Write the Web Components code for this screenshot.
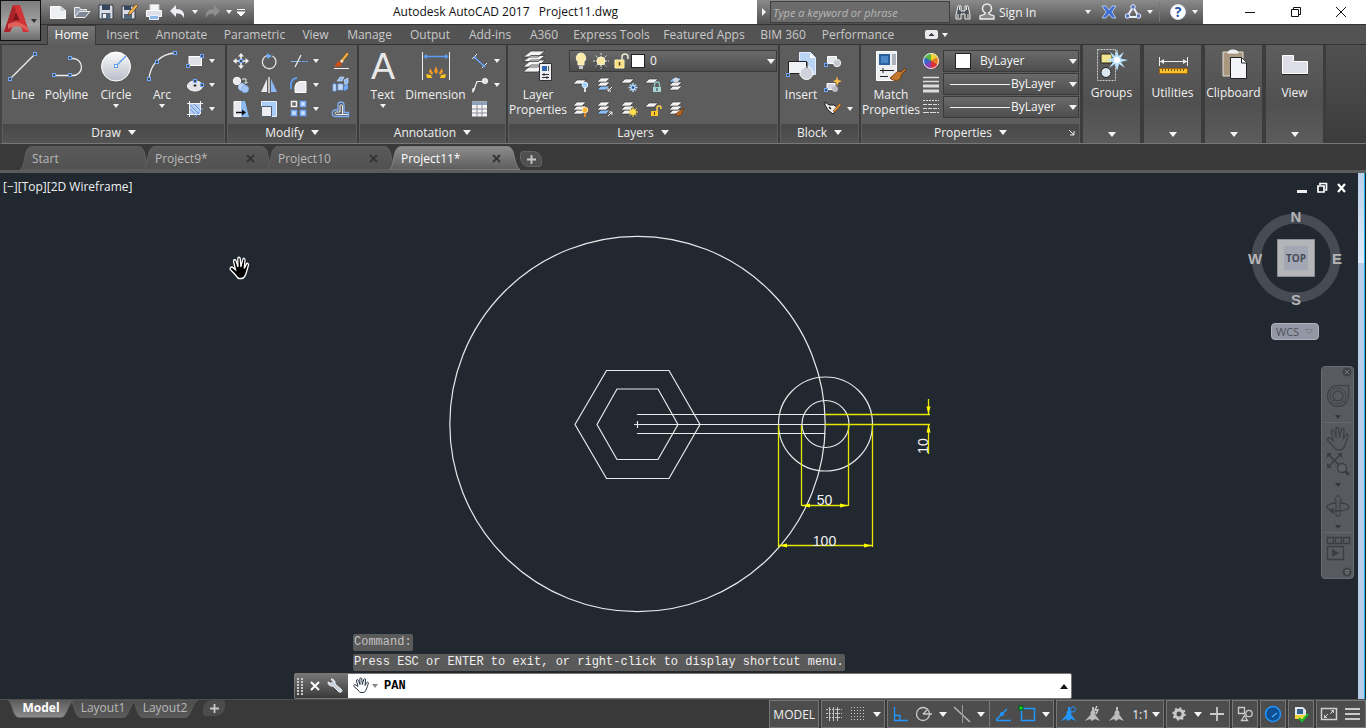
<!DOCTYPE html>
<html lang="en">
<head>
<meta charset="utf-8">
<title>Autodesk AutoCAD 2017 - Project11.dwg</title>
<style>
html,body{margin:0;height:100%;background:#393939}
body{font:11px/15px "Open Sans","Noto Sans",sans-serif;color:#f0f0f0}
</style>
</head>
<body>
<cad-app></cad-app>
<script>
/* ---------- icon artwork: [width, height, markup] ---------- */
const node = (x, y) => `<rect x="${x - 1.5}" y="${y - 1.5}" width="3" height="3" fill="#44484f" stroke="#6fa8ff"/>`;
const sheet = (x, y, f = '#f2f2f2') => `<path d="M${x + 4} ${y}h9l-4 4h-9z" fill="${f}" stroke="#333" stroke-width=".6"/>`;
const stack = (blue = -1) => [0, 1, 2].reverse().map(i => sheet(2, 3 + i * 4, i === blue ? '#8cc0f5' : '#f2f2f2')).join('');
const hand = 'M6 13 2 9.500c-1-1 .5-2.500 2-1.500l2 1.500L4.500 4c-.4-1.600 1.400-2 2-.5l1.500 4-.2-5.500c0-1.500 1.900-1.500 2 0l.5 5.500 1.500-5c.4-1.400 2-1 1.800.5L13 8.500l1.700-2.800c.8-1.200 2.200-.4 1.600.9-.9 2.300-1.300 4.400-2.300 6.400-.7 1.400-1.500 2.500-3 2.500H9c-1.500 0-2.200-1.500-3-2.500z';
const person = (f, extra = '') => `<path d="M8 2v6L1 16l5-2 2 2 3-2 5 2-6-8V2z" fill="${f}"/><circle cx="9" cy="8" r="2.500" fill="${f}"/>${extra}`;
const ICONS = {
  down: [6, 4, '<path d="M0 0h6L3 4z" fill="#f4f4f4"/>'],
  downb: [8, 5, '<path d="M0 0h8L4 5z" fill="#f4f4f4"/>'],
  line: [32, 32, `<path d="M3 28 28 3" stroke="#eee" stroke-width="1.300"/>${node(3, 28)}${node(28, 3)}`],
  polyline: [32, 32, `<path d="M3 24.500H22a8.500 8.500 0 0 0 0-17h-3" fill="none" stroke="#eee" stroke-width="1.300"/>${node(3, 24)}${node(19, 24)}${node(19, 7)}`],
  circle: [32, 32, `<circle cx="16" cy="15.500" r="14.500" fill="url(#g)" stroke="#fff"/><defs><linearGradient id="g" x2="0" y2="1"><stop stop-color="#fcfcfd"/><stop offset="1" stop-color="#b9bdc9"/></linearGradient></defs><path d="M16 15 26 5" stroke="#5b9cf5" stroke-width="1.300"/><rect x="14.500" y="13.500" width="3" height="3" fill="#fff" stroke="#5b9cf5"/>`],
  arc: [32, 32, `<path d="M3 28C4 14 14 3 29 2" fill="none" stroke="#eee" stroke-width="1.300"/>${node(3, 28)}${node(11, 11)}${node(29, 2)}`],
  rect: [20, 20, `<rect x="4" y="5.500" width="12.500" height="9" fill="#dfe1e8" stroke="#fff"/>${node(3, 15)}${node(17, 5)}`],
  ellipse: [20, 20, `<ellipse cx="10" cy="11" rx="7.500" ry="5" fill="#e2e4ea" stroke="#fff"/>${node(10, 6)}${node(17, 10)}<path d="M8.500 10.500h3M10 9v3" stroke="#222"/>`],
  hatch: [20, 20, '<rect x="5" y="5" width="10" height="10" fill="#b9cfee"/><path d="M5 10 10 15M5 6l9 9M9 5l6 6" stroke="#5b94dd"/><path d="M2 4.500h16M2 15.500h13M4.500 2v16M15.500 2v13" stroke="#f2f2f2"/><path d="M18 9 10 18" stroke="#6fa8ff"/>'],
  move: [20, 20, `<path d="M10 2 13 5.500h-2.200V8H9.200V5.500H7zM10 18l-3-3.500h2.200V12h1.600v2.500H13zM2 10l3.500-3v2.200H8v1.600H5.500V13zM18 10l-3.500 3v-2.200H12V9.200h2.500V7z" fill="#f2f2f2"/>${node(10, 10)}`],
  rotate: [20, 20, '<path d="M13.500 5A6.800 6.800 0 1 1 8 4.500" fill="none" stroke="#e6e6e6" stroke-width="1.300"/><path d="M8 2v6l5-3z" fill="#6fa8ff"/>'],
  trim: [20, 20, '<path d="M2 10.500h6" stroke="#8ab6f8"/><path d="M9 10.500h10" stroke="#6fa8ff" stroke-dasharray="3 1"/><path d="M6 16 12 4" stroke="#eee" stroke-width="1.300"/>'],
  erase: [20, 20, '<path d="M3 17.500h15" stroke="#eee"/><path d="M16 1 9 10l2 2 7-9z" fill="#f0b04a" stroke="#6b3d0b" stroke-width=".6"/><path d="M9 10c-4 0-3 4-6 5 3 2 8 1 8-3z" fill="#c8501e"/><path d="m9 10 1.500-1.500 2 2L11 12z" fill="#f4f0e4"/>'],
  copy: [20, 20, '<circle cx="6" cy="6" r="3.700" fill="#e9eaf0" stroke="#fff"/><circle cx="11" cy="12" r="3.500" fill="#c5d4ee" stroke="#9fc3f8"/><circle cx="14" cy="14" r="3.500" fill="#a9c4ec" stroke="#7fb2fa"/><path d="M11 4h4v4M13.500 7 15 8.500 16.500 7" fill="none" stroke="#eee"/>'],
  mirror: [20, 20, '<path d="M2 17h6V4z" fill="#e8e9ee"/><path d="M12 4v13h6z" fill="#8ab9f5"/><path d="M10 2v16" stroke="#f4f4f4" stroke-width="1.300"/>'],
  fillet: [20, 20, '<path d="M6 17.500v-6a6 6 0 0 1 5-5h6v11z" fill="#e9eaef" stroke="#fff"/><path d="M2 14V9a6 6 0 0 1 6-6" fill="none" stroke="#5f9ff6" stroke-width="1.800"/>'],
  explode: [20, 20, '<path d="m6 6 3-4h4l-2 4zM13 5l4-2v5l-3 2z" fill="#8abcf2" stroke="#ddeaff" stroke-width=".6"/><path d="M2 9h3v7H2zM7 9h5v6H7z" fill="#cadbf4" stroke="#6fa8ff" stroke-width=".8"/><path d="m13 11 4-2v5l-4 2z" fill="#6fa8ff"/>'],
  stretch: [20, 20, '<path d="M3 2.500h7v15H3z" fill="#e8eaf0" stroke="#fff"/><path d="M10 2h4l4 16h-8z" fill="#8dbcf2"/><path d="M5 13.500h7" stroke="#111" stroke-width="1.500"/><path d="M11 10.500v6l4-3z" fill="#111"/>'],
  scale: [20, 20, '<path d="M2.500 2.500h15v15h-15z" fill="#a9cdf6" stroke="#e6f0ff"/><path d="M2.500 7.500h10v10h-10z" fill="#ececf1" stroke="#4e5e74"/>'],
  array: [20, 20, '<path d="M2.500 2.500h5v5h-5z" fill="#666" stroke="#f2f2f2" stroke-width="1.500"/><path d="M11.500 2.500h5v5h-5zM2.500 11.500h5v5h-5zM11.500 11.500h5v5h-5z" fill="#cfe0fb" stroke="#6fa8ff" stroke-width="1.500"/>'],
  offset: [20, 20, '<path d="M3 17.500h14.500v-4H13V6a3 3 0 0 0-6 0v5H4.500a3.200 3.200 0 0 0 0 6.500z" fill="none" stroke="#7db1fb" stroke-width="1.300"/><path d="M17 15.500H5.500c-2 0-2-2.500 0-2.500H9V7a1.200 1.200 0 0 1 2.500 0v8" fill="none" stroke="#f0f0f0"/>'],
  text: [32, 32, '<text x="16" y="28" text-anchor="middle" font-family="Liberation Sans,sans-serif" font-size="36" fill="#e8e8e8">A</text>'],
  dimension: [32, 32, '<path d="M2.500 1v28M29.500 1v28" stroke="#eee"/><path d="M4 5.500h24" stroke="#5b9cf5" stroke-width="1.500"/><path d="M3 5.500 7 3v5zM29 5.500 25 3v5z" fill="#5b9cf5"/><g fill="#f29a1f"><path d="m16 15 2 6-2 2-2-3zM10 17l3 5-1 2-3-3zM22 17l-3 5 1 2 3-3z"/><path d="m6 23 5 1 1 3-5 0zM26 23l-5 1-1 3 5 0z" fill="#f7c51d"/></g>'],
  dimlin: [20, 20, '<path d="M4 6 14 15" stroke="#6fa8ff" stroke-width="1.300"/><path d="M2 8 7 3M12 17l5-5" stroke="#eee"/><circle cx="5" cy="6.500" r="1.300" fill="#6fa8ff"/><circle cx="14" cy="15" r="1.300" fill="#6fa8ff"/>'],
  leader: [20, 20, '<path d="M3 17 7 6.500h6" fill="none" stroke="#eee" stroke-width="1.200"/><path d="M2 18l.5-5 3 1z" fill="#eee"/><circle cx="15" cy="6" r="2.800" fill="#e4e5ea" stroke="#fff" stroke-width=".6"/>'],
  table: [20, 20, '<path d="M2 2.500h15v15H2z" fill="#f4f4f4"/><path d="M2 3h15v3H2z" fill="#8aa2bb"/><path d="M2 10h15M2 14h15M7 6v12M12 6v12" stroke="#8a8f97"/>'],
  layerprops: [32, 32, '<g stroke="#3a3a3a" fill="#f3f3f3" stroke-width=".8"><path d="M9 14h14l-7 7H1zM9 9h14l-7 7H1zM9 4.500h14l-7 6H1zM9 0h14l-7 6H1z"/></g><path d="M17.500 12.500h12v17h-12z" fill="#eceef2" stroke="#333"/><path d="M20 15h5v5h-5z" fill="#2f68ad"/><path d="M26.500 15v5" stroke="#555"/><path d="M20 23.500h7M20 26.500h7M22 22v3M25 25v3" stroke="#333"/>'],
  bulb: [20, 20, '<path d="M10 2a5 5 0 0 0-3 8.800V14h6v-3.200A5 5 0 0 0 10 2z" fill="#fdebA8" stroke="#f7f2d0"/><path d="M8 15h4v3H8z" fill="#c9c9cf"/>'],
  sun: [20, 20, '<path d="M10 2v16M2 10h16M4.500 4.500l11 11M15.500 4.500l-11 11" stroke="#dedede" stroke-dasharray="2 1"/><circle cx="10" cy="10" r="4" fill="#fbe7a4" stroke="#fff3cf"/>'],
  unlock: [20, 20, '<path d="M11 9V6a3 3 0 0 1 6 0v2" fill="none" stroke="#f2ead0" stroke-width="1.500"/><path d="M4 9h9v8H4z" fill="#fbdf7d" stroke="#fff3c4"/><path d="M8.500 11v3.500" stroke="#444" stroke-width="1.500"/>'],
  lyoff: [20, 20, sheet(2, 5) + '<circle cx="14" cy="10" r="2.800" fill="#9bd0ff" stroke="#e2f2ff"/><path d="M13 13h2v4h-2z" fill="#ddd"/>'],
  lyiso: [20, 20, stack(2) + '<path d="M17 12l-4 4m0-3v3h3" fill="none" stroke="#eee"/>'],
  lyfreeze: [20, 20, sheet(2, 4) + '<path d="M14 8v9M9.500 12.500h9M11 9.500l6 6M17 9.500l-6 6" stroke="#b8dcff" stroke-width="1.500"/><circle cx="14" cy="12.500" r="1.300" fill="#1c4c86"/>'],
  lylock: [20, 20, sheet(2, 4) + '<path d="M11.500 12V9.500a2.500 2.500 0 0 1 5 0V12" fill="none" stroke="#8fc6c4" stroke-width="1.300"/><path d="M10 12h8v5h-8z" fill="#a7d3d1"/><path d="M14 13v3" stroke="#244"/>'],
  lymake: [20, 20, stack(0) + '<circle cx="9" cy="5" r="2.500" fill="#d7d9df"/>'],
  lyon: [20, 20, stack() + '<circle cx="14" cy="11" r="2.800" fill="#ffb52e" stroke="#ffe6ac"/><path d="M13 14h2v4h-2z" fill="#e0842a"/>'],
  lyuniso: [20, 20, stack(2) + '<path d="M13 17l4-4m0 3v-3h-3" fill="none" stroke="#eee"/>'],
  lythaw: [20, 20, stack() + '<path d="M14 8v10M9 13h10M10.500 9.500l7 7M17.500 9.500l-7 7" stroke="#ffd84a"/><circle cx="14" cy="13" r="3" fill="#ffe04f"/>'],
  lyunlock: [20, 20, sheet(2, 4) + '<path d="M14 12V9a2 2 0 0 1 4 0v1" fill="none" stroke="#ffd64a" stroke-width="1.500"/><path d="M8 12h7v5H8z" fill="#ffc928"/><path d="M11.500 13v3" stroke="#543"/>'],
  lymatch: [20, 20, stack() + '<path d="m17 9-4 3c-2 0-3 3-5 3 3 3 7 2 7-1z" fill="#b5641e" stroke="#6b3308" stroke-width=".6"/>'],
  insert: [32, 32, '<path d="M14.500 1.500h11l5 5v17h-16z" fill="#b9d4f4" stroke="#e2eeff"/><path d="M25 2v5h5" fill="#fff"/><path d="M3.500 10.500h18v12h-18z" fill="#f0f1f4" stroke="#222"/><circle cx="21.500" cy="22" r="6.500" fill="#cfd2da" stroke="#fff"/><path d="M22 11v6" stroke="#222"/>' + node(3, 24)],
  blk1: [20, 20, '<path d="M4.500 5.500h9v7h-9z" fill="#e6e7ec" stroke="#fff"/><circle cx="14" cy="12" r="3.700" fill="#c5c8d0" stroke="#eee"/>' + node(3, 14)],
  blk2: [20, 20, '<path d="M4 8.500h8v6H4z" fill="#d3d6de" stroke="#fff"/><circle cx="12" cy="14" r="3" fill="#b9bcc6"/><path d="m14 1 1 4 4 1-3.500 1.500L14 11l-1-3.500L10 6l3-1z" fill="#ffc04a"/>' + node(3, 15)],
  blk3: [20, 20, '<path d="M2 3v3l3 5 5 4 5-6-4-3H6z" fill="#f1f1f1" stroke="#222"/><path d="m17 4-7 8 2 1 6-7z" fill="#ee9b35" stroke="#5b3308" stroke-width=".6"/><path d="M6 8l2 2" stroke="#111" stroke-width="1.500"/>'],
  match: [32, 32, '<path d="M1.500 .5h20v29h-20z" fill="#eceef2" stroke="#fff"/><path d="M4 3h11v11H4z" fill="#2c5f9e"/><path d="M6 5h7v7H6z" fill="#4b86c9"/><path d="M17 3h4v11h-4z" fill="#aeb4bd"/><path d="M5 19.500h14M5 25.500h8M8 17v5" stroke="#222"/><path d="m30 17-4 4-3-1-8 7c4 4 10 3 11-1l1-3 4-4z" fill="#c4762a" stroke="#5d3208" stroke-width=".8"/>'],
  wheel: [20, 20, '<g><path d="M10 10V2a8 8 0 0 1 7 4z" fill="#f2d22b"/><path d="M10 10l7-4a8 8 0 0 1 0 8z" fill="#ee7c27"/><path d="M10 10l7 4a8 8 0 0 1-7 4z" fill="#dd2f35"/><path d="M10 10v8a8 8 0 0 1-7-4z" fill="#8a3fb5"/><path d="M10 10l-7 4a8 8 0 0 1 0-8z" fill="#3566cf"/><path d="M10 10 3 6a8 8 0 0 1 7-4z" fill="#55b544"/></g><circle cx="10" cy="10" r="7.500" fill="none" stroke="#e9e9e9"/>'],
  lweight: [20, 20, '<path d="M2 3.500h16M2 7.500h16" stroke="#ddd" stroke-width="1.500"/><path d="M2 12h16" stroke="#ddd" stroke-width="3"/><path d="M2 17h16" stroke="#ddd" stroke-width="3"/>'],
  ltype: [20, 20, '<path d="M2 3.500h16" stroke="#ddd" stroke-dasharray="2 1"/><path d="M2 7.500h16M2 11.500h16" stroke="#ddd" stroke-dasharray="4 1"/><path d="M2 15.500h16" stroke="#ddd" stroke-dasharray="6 1"/>'],
  rule: [60, 3, '<path d="M0 1.500h60" stroke="#f0f0f0"/>'],
  groups: [32, 32, '<path d="M1.500 .5h18v31h-18z" fill="none" stroke="#ccc" stroke-dasharray="2 1"/><path d="M5 5h11v9H5z" fill="#f0e58c" stroke="#222"/><circle cx="10" cy="23.500" r="5" fill="#dbe8f2" stroke="#222"/><path d="m21 0 1.500 7L28 3l-3.500 6.500L32 11l-7 2 4 6-6-4-2 7-2-7-6 4 4-6-7-2 7-2-3-6 5 4z" fill="#b9e2ff"/><circle cx="21" cy="11" r="3" fill="#fff"/>'],
  utilities: [32, 32, '<path d="M2.500 8v9M30.500 8v9M3 12.500h27" stroke="#eee"/><path d="M3 12.500 7 10v5zM30 12.500 26 10v5z" fill="#eee"/><path d="M2.500 19.500h28v5h-28z" fill="#f3c32d" stroke="#a4610e"/><path d="M5.500 20v2M8.500 20v2M11.500 20v2M14.500 20v2M17.500 20v2M20.500 20v2M23.500 20v2M26.500 20v2" stroke="#7a4a08"/>'],
  clipboard: [32, 32, '<path d="M5 3h20v24H5z" fill="#a9977f" stroke="#e6e0d8"/><path d="M10 4c0-4 10-4 10 0z" fill="#e7e8ec" stroke="#fff"/><path d="M12.500 8.500h11l5 5v16h-16z" fill="#f3f4f7" stroke="#222"/><path d="M23.500 9v5h5" fill="#fff" stroke="#222"/>'],
  view: [32, 32, '<path d="M3.500 6.500h11v6h14v12h-25z" fill="#dcdde6" stroke="#fff"/><path d="M3 25.500h26" stroke="#222"/>'],
  logo: [28, 30, '<path d="M1 28 10 1h7l9 27h-6l-2-7C14 19 9 22 7 28z" fill="#d43a3c"/><path d="M10 1h7l9 27h-6L13 6z" fill="#cf3437"/><path d="M13 8 9 18c3-2 6-2 8-1z" fill="#7d1719"/><path d="M1 28 10 1l3 5-6 22z" fill="#a92328"/><path d="M5 20c6-3 13-2 19 3l2 5c-7-6-14-7-21-3z" fill="#e0605a"/>'],
  new: [20, 20, '<path d="M2.500 4.500h10l5 4v8h-15z" fill="#eef0f4" stroke="#fff"/><path d="M12.500 4.500v4h5" fill="#c9ccd4"/>'],
  open: [20, 20, '<path d="M2.500 15.500v-10h5l1 2h6v2" fill="#99a2ae" stroke="#eee"/><path d="M2.500 15.500 7 9.500h11l-5 6z" fill="#7d8896" stroke="#eee"/>'],
  save: [20, 20, '<path d="M3 3h14v14H3z" fill="#d9dce3" stroke="#303947"/><path d="M6 3h8v5H6z" fill="#35465e"/><path d="M5.500 11h9v6h-9z" fill="#55657c"/><path d="M7 12h3v4H7z" fill="#eee"/>'],
  saveas: [20, 20, '<path d="M2 4h13v13H2z" fill="#d9dce3" stroke="#303947"/><path d="M4 4h7v4H4z" fill="#35465e"/><path d="M4 12h8v5H4z" fill="#55657c"/><path d="m16 2 2 2-7 8-3 1 1-3z" fill="#f3b74f" stroke="#5a3a12" stroke-width=".7"/>'],
  print: [20, 20, '<path d="M6 2.500h9v6H6z" fill="#f4f5f7" stroke="#ccc"/><path d="M2.500 8.500h15v6h-15z" fill="#dfe1e6" stroke="#fff"/><path d="M5.500 13.500h9v4h-9z" fill="#8fb9e8" stroke="#eef"/>'],
  undo: [20, 20, '<path d="M8 3v4c6 0 9 3 8 9-2-4-4-4.500-8-4.500V15L2 9z" fill="#eceef2"/>'],
  redo: [20, 20, '<path d="M12 3v4c-6 0-9 3-8 9 2-4 4-4.500 8-4.500V15l6-6z" fill="#8f8f8f"/>'],
  qat: [10, 9, '<path d="M1 1.500h8M1 4h8L5 8z" stroke="#fff" fill="#fff"/>'],
  play: [6, 8, '<path d="M1 0v8l4-4z" fill="#f4f4f4"/>'],
  binoc: [20, 20, '<path d="M5 4h3v5h4V4h3l2 9v4h-5v-5H8v5H3v-4z" fill="#4c5058" stroke="#f0f0f0"/><path d="M5 12v4M15 12v4M6.500 5v3M13.500 5v3" stroke="#f0f0f0"/>'],
  user: [20, 20, '<circle cx="10" cy="6.500" r="4.500" fill="none" stroke="#eee" stroke-width="1.500"/><path d="M8 10v2l-5 2v3h14v-3l-5-2v-2" fill="#888" stroke="#eee" stroke-width="1.300"/>'],
  exch: [20, 20, '<path d="M3 4h4l3 4 3-4h4l-4 6 4 6h-4l-3-4-3 4H3l4-6z" fill="#3f6fd0" stroke="#dce6ff" stroke-width=".7"/>'],
  a360: [20, 20, '<path d="M10 5 4 15h12z" fill="none" stroke="#e9edf8" stroke-width="2"/><g fill="#5677bd" stroke="#e9edf8"><circle cx="10" cy="5" r="2.300"/><circle cx="4.500" cy="14" r="2.300"/><circle cx="15.500" cy="14" r="2.300"/></g>'],
  help: [20, 20, '<circle cx="10" cy="10" r="7.500" fill="#fff" stroke="#d5dcea"/><text x="10" y="15" text-anchor="middle" font-family="Open Sans,sans-serif" font-weight="700" font-size="14" fill="#2353ad">?</text>'],
  min: [12, 12, '<path d="M1 6.500h10" stroke="#111"/>'],
  restore: [12, 12, '<path d="M1.500 3.500h7v7h-7zM3.500 3V1.500h7v7H9" fill="none" stroke="#111"/>'],
  close: [12, 12, '<path d="m1 1 10 10M11 1 1 11" stroke="#111"/>'],
  ribbonmin: [13, 9, '<rect width="13" height="9" rx="2" fill="#e8eaee"/><path d="M3.500 6h6l-3-3z" fill="#333"/>'],
  launcher: [7, 7, '<path d="m1 1 5 5M6 2v4H2" stroke="#eee" fill="none"/>'],
  tabx: [9, 9, '<path d="m1 1 7 7M8 1 1 8" stroke="#343434" stroke-width="1.800"/>'],
  plus: [9, 9, '<path d="M4.500 0v9M0 4.500h9" stroke="#c8c8c8" stroke-width="1.800"/>'],
  vmin: [12, 12, '<path d="M1 8h10v3H1z" fill="#eee"/>'],
  vrestore: [12, 12, '<path d="M4 3V1.500h6.500V8H9M2 4h6v6H2z" fill="none" stroke="#fff" stroke-width="1.700"/>'],
  vclose: [12, 12, '<path d="m2 2 7 8M9 2l-7 8" stroke="#fff" stroke-width="2.200"/>'],
  grip: [6, 18, '<path d="M1 1v17M5 1v17" stroke="#c9c9c9" stroke-width="2" stroke-dasharray="2 1"/>'],
  cmdx: [10, 10, '<path d="m1 1 8 8M9 1 1 9" stroke="#fff" stroke-width="2"/>'],
  wrench: [16, 16, '<path d="M1 4a4 4 0 0 0 5 4l6 6c2 1 4-1 2.500-2.500L8 6a4 4 0 0 0-4-5l2 2.500L4 5.500z" fill="#c5d0de" stroke="#f4f4f4"/>'],
  pan: [18, 18, `<path d="${hand}" fill="#fff" stroke="#2d3948"/>`],
  graydown: [6, 4, '<path d="M0 0h6L3 4z" fill="#888"/>'],
  blackup: [8, 5, '<path d="M0 5h8L4 0z" fill="#111"/>'],
  grid: [18, 18, '<path d="M4.500 2v14M8.500 2v14M12.500 2v14" stroke="#c4c4c4"/><path d="M1 4.500h16M1 8.500h16M1 12.500h16" stroke="#c4c4c4" stroke-dasharray="2 1"/>'],
  snap: [18, 18, '<g stroke="#c9c9c9" stroke-dasharray="1 2"><path d="M2 2.500h15M2 5.500h15M2 8.500h15M2 11.500h15M2 14.500h15"/></g>'],
  ortho: [18, 18, '<path d="M3.500 2v13.500H17M4 10.500h5v5" fill="none" stroke="#2196ff" stroke-width="1.300"/>'],
  polar: [18, 18, '<circle cx="8" cy="9" r="6.500" fill="none" stroke="#c9c9c9" stroke-width="1.300"/><path d="M8 9h9M8 9l5-5" stroke="#c9c9c9" stroke-width="1.300"/>'],
  iso: [18, 18, '<path d="m1 2 16 15" stroke="#b5b5b5" stroke-width="1.500"/><path d="M9.500 0v18" stroke="#999"/>'],
  track: [18, 18, '<path d="M2 15.500h15M2 15 13 4" stroke="#2196ff" stroke-width="1.500"/><circle cx="8" cy="9" r="2" fill="#2196ff"/>'],
  osnap: [18, 18, '<path d="M3.500 3.500h13v12h-13z" fill="none" stroke="#2196ff" stroke-width="1.500"/><rect x="1" y="1" width="4" height="4" fill="#16d31b" stroke="#052"/>'],
  ann1: [18, 18, person('#2196ff', '<circle cx="13" cy="4.500" r="2.500" fill="#454b52" stroke="#2196ff"/>')],
  ann2: [18, 18, person('#bcbcbc', '<path d="m13 1-2 4h3l-2 4" fill="none" stroke="#d5d5d5" stroke-width="1.300"/>')],
  ann3: [18, 18, person('#bcbcbc')],
  gear: [18, 18, '<circle cx="9" cy="9" r="4" fill="none" stroke="#c9c9c9" stroke-width="3"/><circle cx="9" cy="9" r="5.800" fill="none" stroke="#c9c9c9" stroke-width="2" stroke-dasharray="2 2.500"/>'],
  bigplus: [18, 18, '<path d="M9 2v14M2 9h14" stroke="#c9c9c9" stroke-width="1.800"/>'],
  shapes: [18, 18, '<path d="M2.500 2.500h6v6h-6zM5.500 15.500h6l-3-5z" fill="none" stroke="#c9c9c9" stroke-width="1.300"/><circle cx="13" cy="8.500" r="3.200" fill="none" stroke="#c9c9c9" stroke-width="1.300"/>'],
  perf: [18, 18, '<circle cx="9" cy="9" r="7.500" fill="#0f4f93" stroke="#2196ff" stroke-width="1.500"/><path d="m8 12 5-4" stroke="#43aaff" stroke-width="1.500"/>'],
  trusted: [18, 18, '<path d="M3 2h8l3 3v6H3z" fill="#e2e6ec"/><path d="M5 4h6v5H5z" fill="#35618f"/><path d="M3 10h10v4H3z" fill="#f5d438"/><path d="m7 13 3 3 6-7" fill="none" stroke="#1dbb2b" stroke-width="2"/>'],
  full: [18, 18, '<path d="M1.500 3.500h15v11h-15z" fill="none" stroke="#d0d0d0" stroke-width="1.500"/><path d="M4 13V9.500L7.500 13zM14 5v3.500L10.500 5z" fill="#d0d0d0"/><path d="m5 12 3-3M13 6l-3 3" stroke="#d0d0d0"/>'],
  menu: [18, 18, '<path d="M1 4h15M1 9h15M1 14h15" stroke="#c9c9c9" stroke-width="2"/>'],
  nclose: [10, 10, '<circle cx="5" cy="5" r="4.500" fill="#3f4347"/><path d="m3 3 4 4M7 3 3 7" stroke="#777"/>'],
  nmore: [10, 10, '<circle cx="5" cy="5" r="4.500" fill="#3f4347"/><path d="M3 3.500h4M3 5h4L5 7.500z" stroke="#777" fill="none"/>'],
  nwheel: [24, 24, '<path d="M12 1.500h10.500V12A10.500 10.500 0 1 1 12 1.500z" fill="none" stroke="#3f4347" stroke-width="1.300"/><circle cx="12" cy="12" r="8" fill="none" stroke="#3f4347"/><circle cx="12" cy="12" r="5" fill="none" stroke="#3f4347" stroke-width="1.300"/><path d="m8 16-3 3M16 16l3 3" stroke="#3f4347"/>'],
  npan: [24, 26, `<path d="${hand}" transform="translate(-1 0) scale(1.400 1.550)" fill="none" stroke="#3f4347"/>`],
  nzoom: [24, 24, '<path d="m2 2 13 13M15 2 2 15" stroke="#3a3e42" stroke-width="1.500"/><path d="M1 1h5L1 6zM16 1v5l-5-5zM1 16v-5l5 5z" fill="#3a3e42"/><circle cx="16" cy="16" r="4.500" fill="#5c6064" stroke="#3a3e42" stroke-width="1.300"/><path d="m19 19 4 4" stroke="#3a3e42" stroke-width="3"/>'],
  norbit: [24, 24, '<path d="M10 22V6H8l4-5 4 5h-2v16z" fill="none" stroke="#3a3e42"/><path d="M10 9C5 9 1 11 1 13s5 4 11 4 11-2 11-4-4-4-9-4" fill="none" stroke="#3a3e42" stroke-width="1.300"/><path d="M3 17l5-3v6z" fill="#3a3e42"/>'],
  nmotion: [24, 26, '<path d="M1.500 1.500h6v6h-6zM9.500 1.500h6v6h-6zM17.500 1.500h6v6h-6zM1.500 10.500h16v13h-16z" fill="none" stroke="#3a3e42" stroke-width="1.300"/><path d="M6 13v8l7-4z" fill="#3a3e42"/>'],
  ndown: [6, 4, '<path d="M0 0h6L3 4z" fill="#33373b"/>']
};

/* Registers a custom element whose open shadow root is filled once, on connection. */
const BASE = `*{box-sizing:border-box}
button{font:inherit;color:inherit;background:none;border:0;padding:0;margin:0;cursor:default}
a{color:inherit;text-decoration:none}`;
function component(tag, css, render) {
  customElements.define(tag, class extends HTMLElement {
    connectedCallback() {
      if (this.shadowRoot) return;
      this.attachShadow({ mode: 'open' }).innerHTML = `<style>${BASE}${css}</style>${render(this)}`;
    }
  });
}
const ic = name => `<cad-icon name="${name}"></cad-icon>`;

component('cad-icon', `:host{display:inline-flex;flex:none}svg{display:block;overflow:visible}`, el => {
  const [w, h, art] = ICONS[el.getAttribute('name')];
  return `<svg width="${w}" height="${h}" viewBox="0 0 ${w} ${h}" aria-hidden="true">${art}</svg>`;
});

/* Tall ribbon button: 32px picture, caption of one or two lines, optional arrow */
component('tool-button', `:host{display:block;width:var(--w,44px);padding-top:6px}
button{display:flex;flex-direction:column;align-items:center;width:100%;font-size:12px}
.cap{margin-top:4px;text-align:center;white-space:nowrap}
.arr{margin-top:2px;display:flex}`, el =>
  `<button>${ic(el.getAttribute('icon'))}<span class="cap"><slot></slot></span>${el.hasAttribute('arrow') ? `<span class="arr">${ic('down')}</span>` : ''}</button>`);

/* Small icon-only button */
component('icon-button', `:host{display:flex;align-items:center}
button{display:flex;align-items:center;gap:4px}`, el =>
  `<button aria-label="${el.getAttribute('label')}" title="${el.getAttribute('label')}">${ic(el.getAttribute('icon'))}${el.hasAttribute('arrow') ? ic('down') : ''}</button>`);

component('ribbon-panel', `:host{display:flex;flex-direction:column;border-right:2px solid #3c3c3c;width:var(--w);background:#5d5d5d}
.body{display:flex;flex:1;height:78px}
footer{display:flex;align-items:center;justify-content:center;height:19px;margin:0 1px;padding-bottom:2px;background:linear-gradient(#484848,#545454)}
footer button{display:flex;align-items:center;gap:7px;font-size:12px}
.launch{margin-left:auto;padding-right:4px;display:flex}
.pad{margin-right:auto;width:11px}`, el => {
  const l = el.hasAttribute('launcher');
  return `<div class="body"><slot></slot></div><footer>${l ? '<span class="pad"></span>' : ''}<button>${el.getAttribute('name')}${ic('downb')}</button>${l ? `<button class="launch" aria-label="Properties palette">${ic('launcher')}</button>` : ''}</footer>`;
});

component('collapsed-panel', `:host{display:flex;width:61px;padding:0 1px;border-right:2px solid #3c3c3c;background:#3c3c3c}
button{display:flex;flex:1;flex-direction:column;align-items:center;padding:4px 0 6px;background:linear-gradient(#5e5e5e,#505050 60%,#5c5c5c);font-size:12px}
.cap{margin-top:4px;flex:1;white-space:nowrap}`, el =>
  `<button>${ic(el.getAttribute('icon'))}<span class="cap"><slot></slot></span>${ic('downb')}</button>`);

/* Drop-down: slotted decoration in front of a native select */
component('ribbon-select', `:host{display:flex;align-items:center;height:22px;border:1px solid #3a3a3a;background:linear-gradient(#6a6a6a,#4e4e4e);padding-right:1px}
select{appearance:none;flex:1;min-width:0;border:0;margin:0;padding:0 0 0 var(--pad,1px);background:none;color:#f4f4f4;font:inherit;font-size:12px;line-height:18px;outline:0}
option{background:#4e4e4e}`, el =>
  `<slot></slot><select aria-label="${el.getAttribute('label')}"><option>${el.getAttribute('value')}</option></select>${ic('downb')}`);

component('title-bar', `:host{display:flex;height:24px;background:#fff;color:#111}
.tools,.info{display:flex;align-items:center;background:linear-gradient(#8b8b8b,#505050);color:#f2f2f2}
.tools{width:254px;padding-left:48px;gap:4px}
h1{flex:1;margin:0;font-size:12px;font-weight:400;text-align:center;white-space:pre;line-height:24px}
.info{width:446px}
.info>.go{display:flex;justify-content:center;width:13px;height:24px;align-items:center}
input{width:180px;height:22px;margin-right:3px;border:1px solid #3f3f3f;background:#6b6b6b;color:#eee;font:italic 11px/16px "Open Sans",sans-serif;padding:0 2px;outline:0}
input::placeholder{color:#b8b8b8;opacity:1}
.info button{display:flex;align-items:center}
.sign{gap:2px;font-size:12px;margin:0 0 0 4px}
.grow{flex:1}
.apps{gap:4px;padding-right:6px}
.help{gap:4px;border-left:1px solid #777;padding:0 5px 0 8px}
.x{margin:0 4px 0 8px}
.win{display:flex;width:163px;align-items:center;padding:0 2px 0 24px}
.win button{flex:1;display:flex;justify-content:center}`, () =>
  `<div class="tools">
    <icon-button icon="new" label="New"></icon-button><icon-button icon="open" label="Open"></icon-button><icon-button icon="save" label="Save"></icon-button><icon-button icon="saveas" label="Save As"></icon-button><icon-button icon="print" label="Plot"></icon-button><icon-button icon="undo" label="Undo" arrow></icon-button><icon-button icon="redo" label="Redo" arrow></icon-button><icon-button icon="qat" label="Customize"></icon-button>
  </div>
  <h1>Autodesk AutoCAD 2017   Project11.dwg</h1>
  <div class="info"><button class="go" aria-label="Collapse search">${ic('play')}</button><input type="text" aria-label="Search" placeholder="Type a keyword or phrase">
    <button aria-label="Search">${ic('binoc')}</button><button class="sign">${ic('user')}Sign In</button><span class="grow"></span>${ic('down')}
    <button class="x" aria-label="Exchange">${ic('exch')}</button><button class="apps" aria-label="Apps">${ic('a360')}${ic('down')}</button><button class="help" aria-label="Help">${ic('help')}${ic('down')}</button></div>
  <div class="win"><button aria-label="Minimize">${ic('min')}</button><button aria-label="Restore">${ic('restore')}</button><button aria-label="Close">${ic('close')}</button></div>`);

component('ribbon-tabs', `:host{display:flex;height:21px;background:#535353;border-top:1px solid #333;border-bottom:1px solid #333;padding-left:47px;color:#c9c9c9;font-size:12px}
nav{display:grid;grid-template-columns:51px 49px 69px 77px 45px 63px 58px 62px 46px 89px 96px 62px 88px}
a{display:block;text-align:center;line-height:20px;white-space:nowrap}
a[aria-current]{height:20px;margin-right:2px;background:linear-gradient(#747474,#5d5d5d);border:1px solid #3a3a3a;border-bottom:0;line-height:18px;color:#fff}
.min{display:flex;align-items:center;gap:4px;margin-left:23px}`, () =>
  `<nav>${['Home', 'Insert', 'Annotate', 'Parametric', 'View', 'Manage', 'Output', 'Add-ins', 'A360', 'Express Tools', 'Featured Apps', 'BIM 360', 'Performance'].map((t, i) => `<a href="#"${i ? '' : ' aria-current="page"'}>${t}</a>`).join('')}</nav><button class="min" aria-label="Minimize ribbon">${ic('ribbonmin')}${ic('down')}</button>`);

component('cad-ribbon', `:host{display:flex;height:99px;background:linear-gradient(#505050,#3c3c3c);border-left:2px solid #444;border-bottom:1px solid #777}
.small{display:grid;grid-auto-rows:24px;padding-top:4px;align-content:start}
.draw{padding-left:4px}
.modify{grid-template-columns:28px 30px 42px 20px;padding-left:4px}
.ann{padding-left:5px}
.block{padding-left:1px}
.layers{flex:1;padding:5px 1px 0 1px}
.row{display:grid;grid-template-columns:repeat(5,24px);grid-auto-rows:24px;padding:1px 0 0 2px}
.props{display:grid;flex:1;grid-template-columns:22px 1fr;grid-auto-rows:22px;row-gap:1px;align-content:start;align-items:center;padding:5px 1px 0 0}
.sw{flex:none;background:#fff;border:1px solid #222;width:14px;height:14px}
.lead{margin-left:1px}
.c{margin:0 3px 0 11px;width:16px;height:16px}
.r{margin-left:6px}`, () =>
  `<ribbon-panel name="Draw" style="--w:225px">
    <tool-button icon="line" style="--w:42px">Line</tool-button><tool-button icon="polyline" style="--w:45px">Polyline</tool-button><tool-button icon="circle" style="--w:54px" arrow>Circle</tool-button><tool-button icon="arc" style="--w:38px" arrow>Arc</tool-button>
    <div class="small draw"><icon-button icon="rect" label="Rectangle" arrow></icon-button><icon-button icon="ellipse" label="Ellipse" arrow></icon-button><icon-button icon="hatch" label="Hatch" arrow></icon-button></div>
  </ribbon-panel>
  <ribbon-panel name="Modify" style="--w:132px"><div class="small modify">
    <icon-button icon="move" label="Move"></icon-button><icon-button icon="rotate" label="Rotate"></icon-button><icon-button icon="trim" label="Trim" arrow></icon-button><icon-button icon="erase" label="Erase"></icon-button>
    <icon-button icon="copy" label="Copy"></icon-button><icon-button icon="mirror" label="Mirror"></icon-button><icon-button icon="fillet" label="Fillet" arrow></icon-button><icon-button icon="explode" label="Explode"></icon-button>
    <icon-button icon="stretch" label="Stretch"></icon-button><icon-button icon="scale" label="Scale"></icon-button><icon-button icon="array" label="Array" arrow></icon-button><icon-button icon="offset" label="Offset"></icon-button>
  </div></ribbon-panel>
  <ribbon-panel name="Annotation" style="--w:149px">
    <tool-button icon="text" style="--w:47px" arrow>Text</tool-button><tool-button icon="dimension" style="--w:59px">Dimension</tool-button>
    <div class="small ann"><icon-button icon="dimlin" label="Linear" arrow></icon-button><icon-button icon="leader" label="Leader" arrow></icon-button><icon-button icon="table" label="Table"></icon-button></div>
  </ribbon-panel>
  <ribbon-panel name="Layers" style="--w:272px">
    <tool-button icon="layerprops" style="--w:60px">Layer<br>Properties</tool-button>
    <div class="layers"><ribbon-select label="Layer" value="0" style="--pad:5px"><cad-icon class="lead" name="bulb"></cad-icon>${ic('sun')}${ic('unlock')}<span class="sw"></span></ribbon-select>
    <div class="row">${[['lyoff', 'Off'], ['lyiso', 'Isolate'], ['lyfreeze', 'Freeze'], ['lylock', 'Lock'], ['lymake', 'Make Current'], ['lyon', 'Turn All Layers On'], ['lyuniso', 'Unisolate'], ['lythaw', 'Thaw All'], ['lyunlock', 'Unlock'], ['lymatch', 'Match Layer']].map(([i, l]) => `<icon-button icon="${i}" label="${l}"></icon-button>`).join('')}</div></div>
  </ribbon-panel>
  <ribbon-panel name="Block" style="--w:81px">
    <tool-button icon="insert" style="--w:42px">Insert</tool-button>
    <div class="small block"><icon-button icon="blk1" label="Create"></icon-button><icon-button icon="blk2" label="Edit"></icon-button><icon-button icon="blk3" label="Edit Attributes" arrow></icon-button></div>
  </ribbon-panel>
  <ribbon-panel name="Properties" style="--w:221px" launcher>
    <tool-button icon="match" style="--w:60px">Match<br>Properties</tool-button>
    <div class="props">${ic('wheel')}<ribbon-select label="Object color" value="ByLayer" style="--pad:6px"><span class="sw c"></span></ribbon-select>${ic('lweight')}<ribbon-select label="Lineweight" value="ByLayer"><cad-icon class="r" name="rule"></cad-icon></ribbon-select>${ic('ltype')}<ribbon-select label="Linetype" value="ByLayer"><cad-icon class="r" name="rule"></cad-icon></ribbon-select></div>
  </ribbon-panel>
  <collapsed-panel icon="groups">Groups</collapsed-panel><collapsed-panel icon="utilities">Utilities</collapsed-panel><collapsed-panel icon="clipboard">Clipboard</collapsed-panel><collapsed-panel icon="view">View</collapsed-panel>`);

/* Drawing tab with curved feet */
component('file-tab', `:host{display:grid;width:131px;height:24px;margin-right:-8px;color:#b9b9b9}
:host([active]){color:#fff;z-index:1}
svg,div{grid-area:1/1}
svg{width:100%;height:24px}
div{display:flex;align-items:center;justify-content:space-between;padding:1px 19px 0 12px;font-size:12px}
.x{display:flex}`, el => {
  const on = el.hasAttribute('active');
  return `<svg viewBox="0 0 131 24" preserveAspectRatio="none" aria-hidden="true"><defs><linearGradient id="t" x2="0" y2="1"><stop stop-color="${on ? '#8d8d8d' : '#5a5a5a'}"/><stop offset="1" stop-color="${on ? '#5c5c5c' : '#515151'}"/></linearGradient></defs><path d="M0 24C5 21 4 9 7 4 9 1 10 .5 13 .5H117c4 0 5 1 7 5 2 6 2 14 7 18z" fill="url(#t)" stroke="${on ? '#8a8a8a' : '#666'}" stroke-width=".8"/></svg><div><button><slot></slot></button>${el.hasAttribute('closable') ? `<button class="x" aria-label="Close tab">${ic('tabx')}</button>` : ''}</div>`;
});
component('file-tabs', `:host{display:flex;align-items:flex-end;height:29px;padding:0 0 0 20px;background:#393939;border-bottom:3px solid #5c5c5c}
.add{display:flex;align-items:center;justify-content:center;width:22px;height:16px;margin:0 0 3px 8px;border-radius:3px 9px 3px 9px;background:#505050;border:1px solid #626262}`, () =>
  `<file-tab>Start</file-tab><file-tab closable>Project9*</file-tab><file-tab closable>Project10</file-tab><file-tab closable active>Project11*</file-tab><button class="add" aria-label="New drawing">${ic('plus')}</button>`);

/* Model-space geometry */
component('cad-drawing', `:host{display:block}svg{display:block;width:100%;height:100%}
.w{fill:none;stroke:#e8e8e8;stroke-width:1.200}.y{fill:none;stroke:#e6e600;stroke-width:1.300}.f{fill:#ff0}
text{font-family:"Liberation Sans",Arial,sans-serif;font-size:14px;fill:#f2f2f2;text-anchor:middle}`, () =>
  `<svg viewBox="0 173 1358 526" role="img" aria-label="Drawing">
  <g class="w"><circle cx="637.500" cy="424" r="187.700"/><path d="M575 424.500 606.500 370.500h62.500l31 54-31 54h-62.500zM597 424.500l20-35.500h41l20 35.500-20 35h-41z"/>
  <path d="M637 414.500H825M637 424.500H825M637 433.500H825.500M637.500 421v7M634 424.500h7"/><circle cx="825.500" cy="424" r="47"/><circle cx="825.500" cy="424" r="23.500"/></g>
  <path class="y" d="M825 414.500H930M825 424.500H930M778.500 425V547M872.500 425V547M801.500 425V506M848.500 425V506M779 545.500H872M802 505.500H848M928.500 399v15M928.500 425v29"/>
  <path class="f" d="m779 545.500 8-2v4zM872 545.500l-8-2v4zM802 505.500l8-2v4zM848 505.500l-8-2v4zM928.500 414.500l-2-8h4zM928.500 424.500l-2 8h4z"/>
  <text x="824.500" y="505">50</text><text x="824.500" y="546">100</text><text transform="translate(928 446) rotate(-90)">10</text>
  <g transform="translate(228 256) scale(1.250 1.450)"><path d="${hand}" fill="#000" stroke="#fff"/></g></svg>`);

component('view-cube', `:host{display:block;width:96px}
svg{display:block}
text{text-anchor:middle;font:700 15px "Liberation Sans",Arial,sans-serif;fill:#b4b4b4}
.top{font:700 10px "Open Sans",sans-serif;fill:#454c59}
button{display:flex;align-items:center;gap:6px;margin:13px 0 0 23px;width:48px;height:17px;padding:0 4px;border:1px solid #b0b3bd;border-radius:4px;background:#9397a3;color:#4d525e;font-size:11px}`, () =>
  `<svg width="96" height="104" viewBox="0 -4 96 104" role="img" aria-label="ViewCube"><circle cx="48" cy="48" r="39.500" fill="none" stroke="#464b54" stroke-width="10"/><path d="M29.500 29.500h37v37h-37z" fill="#b4b5b8" stroke="#8c8e92"/><path d="M36 36h24v24H36z" fill="#a3a7b3"/><text class="top" x="48" y="52">TOP</text><text x="48" y="12">N</text><text x="48" y="95">S</text><text x="7" y="54">W</text><text x="89" y="54">E</text></svg>
  <button>WCS<svg width="8" height="6" viewBox="0 0 8 6"><path d="M.5.5h7L4 5z" fill="none" stroke="#7b7f8a"/></svg></button>`);

component('nav-bar', `:host{display:flex;flex-direction:column;align-items:center;box-sizing:border-box;width:33px;height:213px;border:1px solid #686c70;border-radius:4px;background:#575b60}
button{display:flex}.top,.end{align-self:flex-end;margin-right:1px}
hr{width:27px;border:0;border-top:1px solid #666a6e;margin:3px 0}
.m{margin-top:7px}.end{margin-top:auto;margin-bottom:1px}`, () =>
  `<button class="top" aria-label="Close">${ic('nclose')}</button><button class="m" aria-label="Steering wheel">${ic('nwheel')}</button><button class="m" aria-label="Wheel menu">${ic('ndown')}</button><hr><button aria-label="Pan">${ic('npan')}</button><button aria-label="Zoom">${ic('nzoom')}</button><button class="m" aria-label="Zoom menu">${ic('ndown')}</button><button class="m" aria-label="Orbit">${ic('norbit')}</button><button class="m" aria-label="Orbit menu">${ic('ndown')}</button><hr><button aria-label="ShowMotion">${ic('nmotion')}</button><button class="end" aria-label="Customize">${ic('nmore')}</button>`);

component('command-line', `:host{display:block;width:778px}
.log{padding-left:59px;font:12px/17px "Liberation Mono",monospace}
.log p{width:max-content;margin:0 0 3px;padding:0 1px;border-radius:2px;background:#5a5a5a;color:#f0f0f0}
.log p:first-child{color:#c0c0c0}
.log p:last-child{margin-bottom:2px}
.bar{display:flex;height:26px;background:#fff;border:1px solid #777;border-radius:2px}
.tools{display:flex;align-items:center;gap:7px;width:53px;padding-left:2px;background:linear-gradient(#777,#3a3a3a)}
.bar button{display:flex}
.pan{align-items:center;gap:2px;padding:0 6px 0 4px}
input{flex:1;min-width:0;border:0;padding:0;outline:0;background:none;color:#000;font:700 12px "Liberation Mono",monospace}
.up{align-items:center;padding-right:3px}`, () =>
  `<div class="log"><p>Command:</p><p>Press ESC or ENTER to exit, or right-click to display shortcut menu.</p></div>
  <div class="bar"><div class="tools">${ic('grip')}<button aria-label="Close">${ic('cmdx')}</button><button aria-label="Customize">${ic('wrench')}</button></div><button class="pan" aria-label="Recent commands">${ic('pan')}${ic('graydown')}</button><input type="text" aria-label="Command" value="PAN"><button class="up" aria-label="History">${ic('blackup')}</button></div>`);

component('cad-viewport', `:host{display:grid;grid-template-columns:minmax(0,1fr) 8px;position:relative;min-height:0;background:#212830}
cad-drawing{min-height:0}
.edge{background:linear-gradient(90deg,transparent 6px,#18b7e8 6px,#18b7e8 7px,#222 7px),linear-gradient(#bcd1ea,#dfebf8 90px,#b8cde9 90px)}
.label{position:absolute;left:3px;top:6px;font-size:12px}
.win{position:absolute;right:18px;top:9px;display:flex;gap:8px}
.win button{display:flex}
view-cube{position:absolute;right:22px;top:33px}
nav-bar{position:absolute;right:12px;top:193px}
.cmd{position:absolute;left:0;right:0;bottom:0;display:flex;justify-content:center}`, () =>
  `<cad-drawing></cad-drawing><div class="edge"></div><div class="label">[−][Top][2D Wireframe]</div>
  <div class="win"><button aria-label="Minimize drawing">${ic('vmin')}</button><button aria-label="Restore drawing">${ic('vrestore')}</button><button aria-label="Close drawing">${ic('vclose')}</button></div>
  <view-cube></view-cube><nav-bar></nav-bar><div class="cmd"><command-line></command-line></div>`);

component('layout-tab', `:host{display:grid;width:66px;height:18px;margin-right:-4px;color:#b9b9b9}
:host([active]){color:#fff;font-weight:700;z-index:1}
svg,button{grid-area:1/1}svg{width:100%;height:18px}
button{font-size:12px;line-height:16px;text-align:center;padding-bottom:2px}`, el => {
  const on = el.hasAttribute('active');
  return `<svg viewBox="0 0 67 18" preserveAspectRatio="none" aria-hidden="true"><defs><linearGradient id="l" x2="0" y2="1"><stop stop-color="${on ? '#5a5a5a' : '#4c4c4c'}"/><stop offset="1" stop-color="${on ? '#8c8c8c' : '#5a5a5a'}"/></linearGradient></defs><path d="M0 0c4 2 4 12 8 16 1 1 2 1.500 4 1.500h41c3 0 4-1 5-3C61 10 62 3 67 0z" fill="url(#l)" stroke="#646464" stroke-width=".7"/></svg><button><slot></slot></button>`;
});

component('status-group', `:host{display:flex;align-items:center;gap:6px;box-sizing:border-box;height:28px;border:1px solid #777;background:#4d4d4d;padding:0 3px}`, () => `<slot></slot>`);

component('status-bar', `:host{display:flex;height:29px;box-sizing:border-box;background:#393939;border-top:1px solid #4d4d4d;justify-content:space-between}
.layouts{display:flex;padding-left:8px}
.add{display:flex;align-items:center;justify-content:center;width:22px;height:16px;margin:0 0 0 9px;border-radius:9px 3px 9px 3px;background:#4c4c4c}
.groups{display:flex;gap:2px}
.txt{font-size:12px;white-space:nowrap}
.scale{margin-right:-3px}
.sep{width:1px;align-self:stretch;margin:0 -2px;background:#777}`, () => {
  const b = (i, l) => `<icon-button icon="${i}" label="${l}"></icon-button>`;
  const d = l => b('downb', l);
  return `<div class="layouts"><layout-tab active>Model</layout-tab><layout-tab>Layout1</layout-tab><layout-tab>Layout2</layout-tab><button class="add" aria-label="New layout">${ic('plus')}</button></div>
  <div class="groups"><status-group><button class="txt">MODEL</button></status-group>
  <status-group>${b('grid', 'Grid')}${b('snap', 'Snap')}${d('Snap settings')}</status-group>
  <status-group>${b('ortho', 'Ortho')}${b('polar', 'Polar tracking')}${d('Polar settings')}${b('iso', 'Isometric')}${d('Isometric settings')}<span class="sep"></span>${b('track', 'Object snap tracking')}${b('osnap', 'Object snap')}${d('Object snap settings')}</status-group>
  <status-group>${b('ann1', 'Annotation visibility')}${b('ann2', 'Auto scale')}${b('ann3', 'Annotation scale')}<button class="txt scale">1:1</button>${d('Scale list')}</status-group>
  <status-group>${b('gear', 'Workspace')}${d('Workspaces')}${b('bigplus', 'Annotation monitor')}</status-group>
  <status-group>${b('shapes', 'Isolate objects')}</status-group><status-group>${b('perf', 'Graphics performance')}</status-group><status-group>${b('trusted', 'Trusted file')}</status-group>
  <status-group>${b('full', 'Clean screen')}${b('menu', 'Customization')}</status-group></div>`;
});

component('cad-app', `:host{display:grid;grid-template-rows:24px 21px 99px 29px minmax(0,1fr) 29px;grid-template-columns:minmax(0,1fr);height:100vh;min-height:600px;position:relative;overflow:hidden}
title-bar,ribbon-tabs,cad-ribbon,file-tabs{box-sizing:border-box}
.app{position:absolute;left:0;top:0;z-index:2;display:flex;align-items:flex-start;width:41px;height:41px;padding:3px 2px;border:1px solid #111;background:linear-gradient(#7c7c7c,#a4a4a4 60%,#6c6c6c)}
.app span{align-self:center;display:flex;filter:brightness(.2)}`, () =>
  `<title-bar></title-bar><ribbon-tabs></ribbon-tabs><cad-ribbon></cad-ribbon><file-tabs></file-tabs><cad-viewport></cad-viewport><status-bar></status-bar>
  <button class="app" aria-label="Application menu">${ic('logo')}<span>${ic('down')}</span></button>`);
</script>
</body>
</html>
